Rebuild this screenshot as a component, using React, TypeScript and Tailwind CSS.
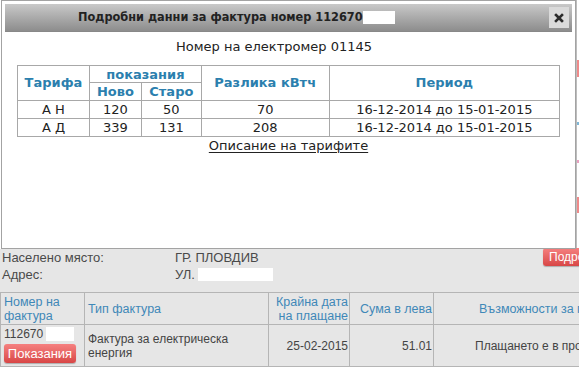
import React from "react";

type Reading = { tariff: string; newVal: string; oldVal: string; diff: string; period: string };

const readings: Reading[] = [
  { tariff: "А Н", newVal: "120", oldVal: "50", diff: "70", period: "16-12-2014 до 15-01-2015" },
  { tariff: "А Д", newVal: "339", oldVal: "131", diff: "208", period: "16-12-2014 до 15-01-2015" },
];

function CloseIcon() {
  return (
    <svg width="10" height="10" viewBox="0 0 10 10">
      <path d="M2 2 L8 8 M8 2 L2 8" stroke="#2b2b2b" strokeWidth="2.6" strokeLinecap="square" />
    </svg>
  );
}

function RedButton({ text, className }: { text: string; className: string }) {
  return (
    <div
      className={`rounded-[3px] bg-linear-to-b from-[#f58080] to-[#d84646] text-white text-[12px] leading-[19px] shadow-[0_1px_1px_rgba(0,0,0,0.25)] ${className}`}
    >
      {text}
    </div>
  );
}

function ReadingsDialog() {
  const th = "border border-[#a8a8a8] text-[#2b7fae] font-bold p-0";
  const td = "border border-[#a8a8a8] p-0 text-center h-[18px] leading-[16px]";
  return (
    <div className="absolute left-[1px] top-0 w-[575px] h-[249px] border border-[#a3a3a3] bg-white p-[3px] font-['DejaVu_Sans',Verdana,sans-serif] text-[13px] text-[#222]">
      <div className="h-[28px] flex items-center bg-linear-to-b from-[#c9c9c9] to-[#8d8d8d] border-b border-[#888]">
        <span className="pl-[73px] font-bold text-[12.6px] text-[#222] font-['DejaVu_Sans_Condensed','DejaVu_Sans',Tahoma,sans-serif]">
          Подробни данни за фактура номер 112670
        </span>
        <span className="inline-block w-[32px] h-[13px] bg-white" />
        <div className="ml-auto mr-[3px] w-[20px] h-[21px] bg-[#dadada] flex items-center justify-center">
          <CloseIcon />
        </div>
      </div>
      <p className="mt-[7px] pr-[29px] text-center leading-[16px]">Номер на електромер 01145</p>
      <table className="mt-[10px] mx-auto w-[543px] border-collapse">
        <colgroup>
          <col className="w-[72px]" />
          <col className="w-[52px]" />
          <col className="w-[60px]" />
          <col className="w-[128px]" />
          <col className="w-[231px]" />
        </colgroup>
        <thead>
          <tr className="h-[17px]">
            <th rowSpan={2} className={th}>Тарифа</th>
            <th colSpan={2} className={`${th} leading-[15px]`}>показания</th>
            <th rowSpan={2} className={th}>Разлика кВтч</th>
            <th rowSpan={2} className={th}>Период</th>
          </tr>
          <tr className="h-[18px]">
            <th className={`${th} leading-[16px]`}>Ново</th>
            <th className={`${th} leading-[16px]`}>Старо</th>
          </tr>
        </thead>
        <tbody>
          {readings.map((r, i) => (
            <tr key={i}>
              <td className={td}>{r.tariff}</td>
              <td className={td}>{r.newVal}</td>
              <td className={td}>{r.oldVal}</td>
              <td className={td}>{r.diff}</td>
              <td className={td}>{r.period}</td>
            </tr>
          ))}
        </tbody>
      </table>
      <p className="mt-[1px] text-center leading-[16px] underline underline-offset-2">Описание на тарифите</p>
    </div>
  );
}

function InvoiceTable() {
  const th = "border border-[#b5b5b5] font-normal text-[#3f88b8] text-[12.5px] leading-[14px] p-0";
  const td = "border border-[#b5b5b5] leading-[14px] p-0";
  return (
    <table className="mt-[9px] w-[680px] border-collapse text-[12px] text-[#444] table-fixed">
      <colgroup>
        <col className="w-[84px]" />
        <col className="w-[184px]" />
        <col className="w-[81px]" />
        <col className="w-[84px]" />
        <col className="w-[247px]" />
      </colgroup>
      <thead>
        <tr className="h-[32px]">
          <th className={`${th} text-left pl-[3px]`}>Номер на<br />фактура</th>
          <th className={`${th} text-left pl-[3px]`}>Тип фактура</th>
          <th className={`${th} text-right pr-[1px]`}>Крайна дата<br />на плащане</th>
          <th className={`${th} text-right pr-[1px]`}>Сума в лева</th>
          <th className={`${th} text-left pl-[45px]`}>Възможности за плащане</th>
        </tr>
      </thead>
      <tbody>
        <tr className="h-[42px]">
          <td className={`${td} pl-[3px] align-top pt-[2px]`}>
            <div className="flex items-center h-[14px]">
              112670<span className="inline-block ml-[3px] w-[28px] h-[14px] bg-white" />
            </div>
            <RedButton text="Показания" className="mt-[3px] w-[72px] text-center text-[13px]" />
          </td>
          <td className={`${td} pl-[3px]`}>Фактура за електрическа<br />енергия</td>
          <td className={`${td} text-right pr-[1px]`}>25-02-2015</td>
          <td className={`${td} text-right pr-[1px]`}>51.01</td>
          <td className={`${td} pl-[41px] whitespace-nowrap`}>Плащането е в процес на обработка</td>
        </tr>
      </tbody>
    </table>
  );
}

function App() {
  return (
    <div className="relative w-[579px] h-[367px] overflow-hidden bg-[#e6e6e6] font-['Liberation_Sans',Arial,sans-serif] text-[#4a4a4a]">
      <div className="h-[249px] bg-white flex justify-end">
        <div className="w-[3px] border-l border-[#bdbdbd] flex flex-col">
          <div className="mt-[60px] h-[17px] bg-[#ef8a8a]" />
          <div className="mt-[45px] h-[3px] bg-[#7fb7d6]" />
          <div className="mt-[35px] h-[3px] bg-[#e9a0c0]" />
          <div className="mt-[34px] h-[16px] bg-[#ef8a8a]" />
        </div>
      </div>
      <div className="text-[13px] leading-[17px]">
        <div className="flex h-[17px]">
          <span className="shrink-0 w-[175px] pl-[2px]">Населено място:</span>
          <span className="shrink-0 w-[368px]">ГР. ПЛОВДИВ</span>
          <RedButton text="Подробни" className="shrink-0 -mt-[1px] w-[80px] h-[18px] px-[6px] leading-[18px]" />
        </div>
        <div className="flex h-[17px] items-center">
          <span className="shrink-0 w-[175px] pl-[2px]">Адрес:</span>
          <span className="shrink-0">УЛ.</span>
          <span className="shrink-0 ml-[3px] inline-block w-[75px] h-[13px] bg-white" />
        </div>
      </div>
      <InvoiceTable />
      <ReadingsDialog />
    </div>
  );
}

export default App;
